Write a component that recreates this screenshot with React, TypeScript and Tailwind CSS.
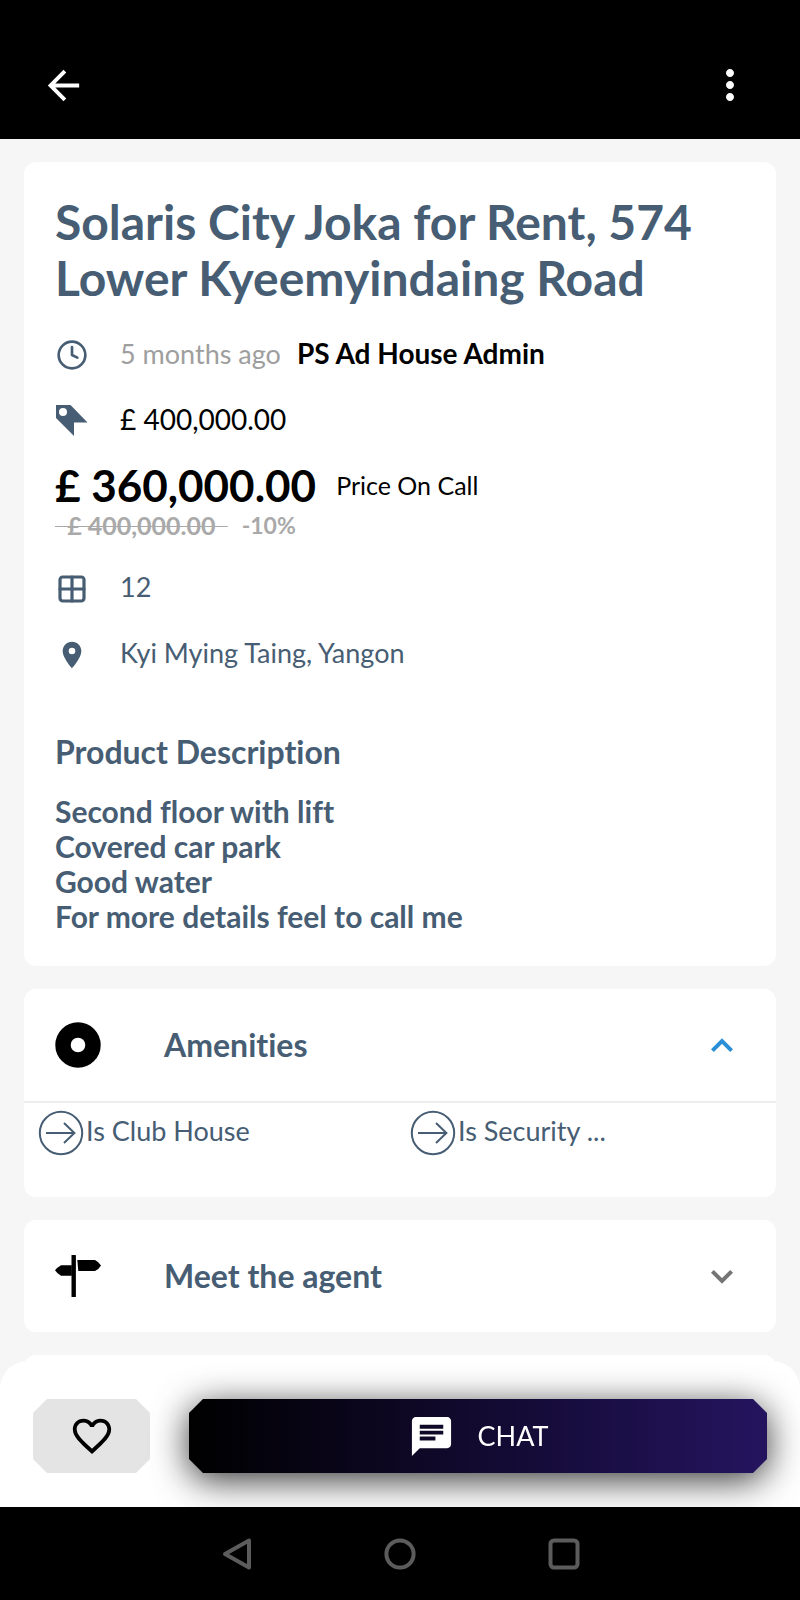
import type { ReactNode } from "react";
import { Clock, Grid2x2 } from "lucide-react";
import { MdArrowBack, MdChat, MdFavoriteBorder, MdLocationOn, MdMoreVert } from "react-icons/md";

function TagIcon() {
  return (
    <svg viewBox="0 0 32 32" className="size-8" fill="currentColor" aria-hidden="true">
      <path fillRule="evenodd" d="M0 0H14.5L31.5 17.5H18V31L0 13ZM7 3a4 4 0 1 0 0 8a4 4 0 0 0 0-8Z" />
    </svg>
  );
}

function SignpostIcon() {
  return (
    <svg viewBox="0 0 46 42" className="h-[42px] w-[46px]" fill="currentColor" aria-hidden="true">
      <rect x="16.5" y="0" width="4.4" height="42" rx="0.6" />
      <path d="M0 15.3Q2 12.5 6 10.2H16.8V20.8H6Q2 18.5 0 15.3Z" />
      <path d="M22.3 5H40Q44 7 46 10.4Q44 14 40 16H23.3Z" />
    </svg>
  );
}

function DiscIcon() {
  return (
    <svg viewBox="0 0 46 46" className="size-[46px]" aria-hidden="true">
      <circle cx="23" cy="23" r="15" fill="none" stroke="currentColor" strokeWidth="15.4" />
    </svg>
  );
}

function CircleArrowIcon() {
  return (
    <svg viewBox="0 0 46 46" className="size-[46px] shrink-0" fill="none" stroke="currentColor" strokeWidth="2" aria-hidden="true">
      <circle cx="23" cy="23" r="21.2" />
      <path d="M8 23H36.4M26 13L36.4 23L26 33" />
    </svg>
  );
}

function Chevron({ open }: { open: boolean }) {
  return (
    <svg viewBox="0 0 44 44" className={open ? "size-11 text-[#2b8fd8]" : "size-11 text-[#757575]"} fill="none" stroke="currentColor" strokeWidth="4" aria-hidden="true">
      <path d={open ? "M12.4 27.6L22 18L31.6 27.6" : "M12.4 17.4L22 27L31.6 17.4"} />
    </svg>
  );
}

function DetailRow({ icon, children }: { icon: ReactNode; children: ReactNode }) {
  return (
    <div className="flex h-10 items-center">
      <span className="flex w-[65px] shrink-0 pt-[3px] pl-px">{icon}</span>
      <div className="text-[27px] leading-10">{children}</div>
    </div>
  );
}

function SectionHeader({ icon, title, open }: { icon: ReactNode; title: string; open: boolean }) {
  return (
    <button type="button" aria-expanded={open} className="flex h-28 w-full items-center pr-8 pl-[31px] text-left">
      <span className="w-[109px] shrink-0 text-black">{icon}</span>
      <span className="flex-1 text-[32px] leading-9 font-bold">{title}</span>
      <Chevron open={open} />
    </button>
  );
}

const bevel =
  "[clip-path:polygon(14px_0,calc(100%-14px)_0,100%_14px,100%_calc(100%-14px),calc(100%-14px)_100%,14px_100%,0_calc(100%-14px),0_14px)]";

const description = ["Second floor with lift", "Covered car park", "Good water", "For more details feel to call me"];

export default function App() {
  return (
    <div className="flex min-h-screen flex-col bg-[#f6f6f6] font-['Lato','Liberation_Sans',sans-serif] text-[#465d73] [font-variant-ligatures:none]">
      <header className="flex items-center justify-between bg-black pt-[61px] pr-[46px] pb-[30px] pl-10 text-white">
        <button type="button" aria-label="Back">
          <MdArrowBack className="size-[47px]" />
        </button>
        <button type="button" aria-label="More options">
          <MdMoreVert className="size-12" />
        </button>
      </header>

      <main className="flex flex-1 flex-col gap-[23px] px-6 pt-[23px]">
        <section className="rounded-xl bg-white px-[31px] pt-8 pb-8">
          <h1 className="text-[48px] leading-14 font-bold">Solaris City Joka for Rent, 574 Lower Kyeemyindaing Road</h1>

          <div className="mt-[27px] flex flex-col gap-[26px]">
            <DetailRow icon={<Clock className="size-8" />}>
              <span className="text-[#9e9e9e]">5 months ago</span>
              <span className="ml-4 text-[28px] font-bold text-black">PS Ad House Admin</span>
            </DetailRow>
            <DetailRow icon={<TagIcon />}>
              <span className="text-[28px] text-black">£ 400,000.00</span>
            </DetailRow>
          </div>

          <div className="mt-[26px] flex items-center text-black">
            <span className="text-[44px] leading-10 font-bold">£ 360,000.00</span>
            <span className="ml-5 text-[25px] leading-10">Price On Call</span>
          </div>
          <div className="mt-1.5 flex items-center leading-7 font-bold text-[#a9a9a9]">
            <s className="text-[25px] leading-7 whitespace-pre decoration-1">{"  £ 400,000.00  "}</s>
            <span className="ml-3.5 text-[23px] leading-7">-10%</span>
          </div>

          <div className="mt-7 flex flex-col gap-[26px]">
            <DetailRow icon={<Grid2x2 className="size-8" strokeWidth={2.4} />}>12</DetailRow>
            <DetailRow icon={<MdLocationOn className="size-8" />}>Kyi Mying Taing, Yangon</DetailRow>
          </div>

          <h2 className="mt-[61px] text-[32px] leading-9 font-bold">Product Description</h2>
          <div className="mt-6 text-[30px] leading-[35px] font-bold">
            {description.map((line) => (
              <p key={line}>{line}</p>
            ))}
          </div>
        </section>

        <section className="rounded-xl bg-white">
          <SectionHeader icon={<DiscIcon />} title="Amenities" open />
          <ul className="grid grid-cols-2 border-t-2 border-[#ededed] px-[14px] pt-[7px] pb-[41px] text-[27px] leading-[42px]">
            <li className="flex">
              <CircleArrowIcon />
              <span className="ml-0.5">Is Club House</span>
            </li>
            <li className="flex pl-2.5">
              <CircleArrowIcon />
              <span className="ml-0.5">Is Security ...</span>
            </li>
          </ul>
        </section>

        <section className="rounded-xl bg-white">
          <SectionHeader icon={<SignpostIcon />} title="Meet the agent" open={false} />
        </section>

        <div className="h-8 rounded-t-xl bg-white" />
      </main>

      <footer className="relative -mt-[26px] overflow-hidden rounded-t-[28px] bg-white">
        <div className="flex gap-[39px] px-[33px] pt-[38px] pb-[34px]">
          <button type="button" aria-label="Add to favourites" className={`flex h-[74px] w-[117px] shrink-0 items-center justify-center bg-[#e4e4e4] text-black ${bevel}`}>
            <MdFavoriteBorder className="size-[46px]" />
          </button>
          <div className="flex-1 drop-shadow-[0_7px_18px_rgba(0,0,0,0.8)]">
            <button type="button" className={`flex h-[74px] w-full items-center justify-center gap-[23px] bg-linear-to-r/srgb from-black to-[#24145f] text-[27px] text-white ${bevel}`}>
              <MdChat className="size-[47px]" />
              CHAT
            </button>
          </div>
        </div>
      </footer>

      <nav aria-label="System" className="flex h-[93px] items-center justify-center gap-[130px] bg-black text-[#5c5c5c]">
        <button type="button" aria-label="Back">
          <svg viewBox="0 0 34 34" className="size-[34px]" fill="none" stroke="currentColor" strokeWidth="4" strokeLinejoin="round">
            <path d="M30 3.5V30.5L6 17Z" />
          </svg>
        </button>
        <button type="button" aria-label="Home">
          <svg viewBox="0 0 34 34" className="size-[34px]" fill="none" stroke="currentColor" strokeWidth="4">
            <circle cx="17" cy="17" r="13.6" />
          </svg>
        </button>
        <button type="button" aria-label="Recent apps">
          <svg viewBox="0 0 34 34" className="size-[34px]" fill="none" stroke="currentColor" strokeWidth="4">
            <rect x="3.5" y="3.5" width="27" height="27" rx="3.5" />
          </svg>
        </button>
      </nav>
    </div>
  );
}
